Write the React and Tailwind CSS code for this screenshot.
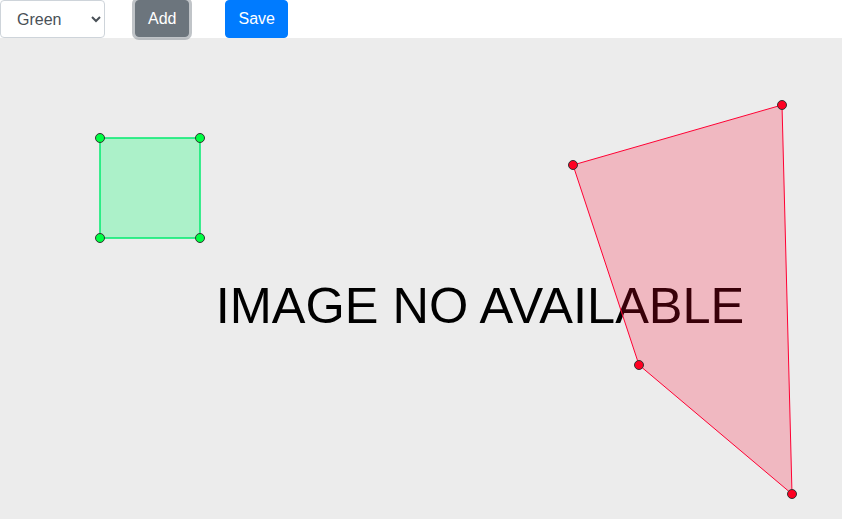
import React from "react";

export default function App() {
  const red = [
    [573, 127],
    [782, 67],
    [792, 456],
    [639, 327],
  ];
  const green = [
    [100, 100],
    [200, 100],
    [200, 200],
    [100, 200],
  ];
  return (
    <div className="w-[842px] h-[519px] overflow-hidden bg-white" style={{ fontFamily: '"Liberation Sans", Arial, sans-serif' }}>
      <div className="flex items-start h-[38px]">
        <select
          defaultValue="Green"
          className="h-[38px] w-[105px] border border-[#ced4da] rounded bg-white pl-3 pr-2 text-base text-[#495057] outline-none"
          style={{ fontFamily: '"Liberation Sans", Arial, sans-serif' }}
        >
          <option>Green</option>
          <option>Red</option>
        </select>
        <button className="ml-[30px] h-[37px] px-3 rounded bg-[#6c757d] border border-[#6c757d] text-white text-base shadow-[0_0_0_3px_rgba(130,138,145,0.5)]">
          Add
        </button>
        <button className="ml-[36px] h-[38px] px-3 rounded bg-[#007bff] border border-[#007bff] text-white text-base">
          Save
        </button>
      </div>
      <div className="w-full h-[481px] bg-[#ececec] overflow-hidden">
        <svg width="960" height="540" className="block">
          <text
            x="480"
            y="285"
            textAnchor="middle"
            fontSize="50.5"
            fill="#000"
            fontFamily='"Liberation Sans", Arial, sans-serif'
          >
            IMAGE NO AVAILABLE
          </text>
          <polygon
            points={green.map((p) => p.join(",")).join(" ")}
            fill="rgba(0,255,109,0.27)"
            stroke="rgba(0,235,110,0.75)"
            strokeWidth="2"
          />
          {green.map(([x, y], i) => (
            <circle key={i} cx={x} cy={y} r="4.5" fill="#00ff44" stroke="#333" strokeWidth="1" />
          ))}
          <polygon
            points={red.map((p) => p.join(",")).join(" ")}
            fill="rgba(255,0,42,0.22)"
            stroke="#ff0033"
            strokeWidth="1"
          />
          {red.map(([x, y], i) => (
            <circle key={i} cx={x} cy={y} r="4.5" fill="#ff0022" stroke="#333" strokeWidth="1" />
          ))}
        </svg>
      </div>
    </div>
  );
}
